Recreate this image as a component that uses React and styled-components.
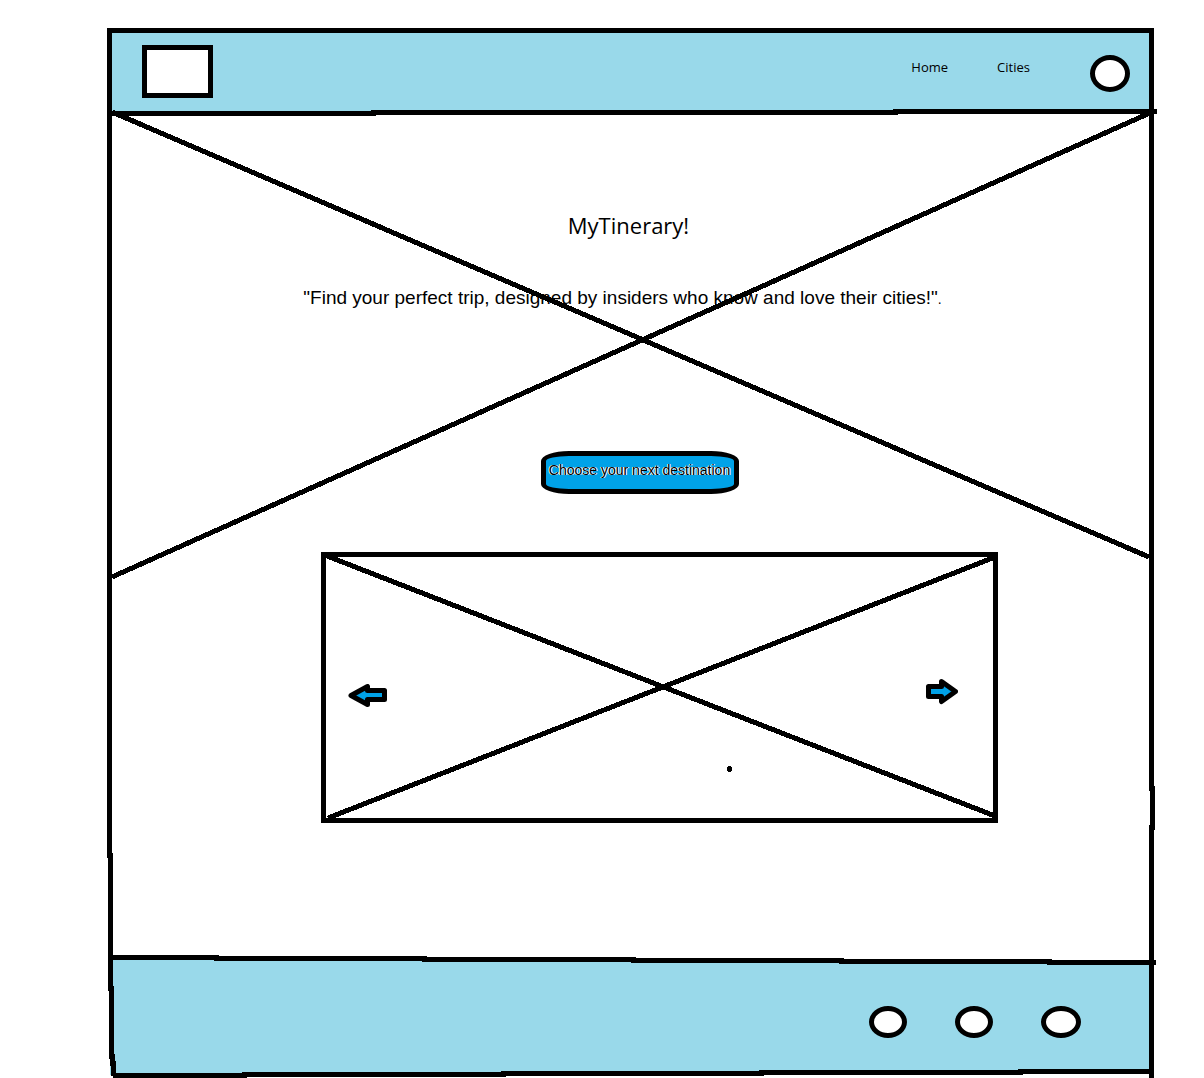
import React from "react";
import styled, { createGlobalStyle } from "styled-components";

const ink = "#000000";
const pale = "#99d9ea";
const accent = "#00a2e8";

const GlobalStyle = createGlobalStyle`
  * { box-sizing: border-box; }
  body { margin: 0; background: #ffffff; color: ${ink}; font-family: "Open Sans", sans-serif; }
`;

const Page = styled.div`
  min-height: 100vh;
  padding: 28px 50px 0 107px;
  display: flex;
`;

const Frame = styled.div`
  position: relative;
  flex: 1;
  display: flex;
  flex-direction: column;
  padding: 5px 3px 3px;
`;

const Strokes = styled.svg`
  position: absolute;
  inset: 0;
  width: 100%;
  height: 100%;
  overflow: visible;
  pointer-events: none;
  fill: none;
  stroke: ${ink};
  stroke-width: 5px;
  shape-rendering: crispEdges;

  path { vector-effect: non-scaling-stroke; }
`;

const Header = styled.header`
  display: flex;
  align-items: center;
  justify-content: space-between;
  padding: 12px 21px 14px 32px;
  background: ${pale};
`;

const Logo = styled.a`
  width: 71px;
  height: 53px;
  border: 5px solid ${ink};
  background: #ffffff;
`;

const HeaderEnd = styled.div`
  display: flex;
  gap: 60px;
  padding-top: 4px;
`;

const Nav = styled.nav`
  display: flex;
  gap: 49px;
`;

const NavLink = styled.a`
  color: ${ink};
  font-size: 13px;
  line-height: 24px;
  text-decoration: none;
`;

const Oval = styled.button`
  width: ${(p) => p.$width}px;
  height: ${(p) => p.$height}px;
  padding: 0;
  border: 5px solid ${ink};
  border-radius: 50%;
  background: #ffffff;
`;

const Main = styled.main`
  flex: 1;
  display: flex;
  flex-direction: column;
  align-items: center;
  padding: 98px 0 124px;
`;

const Title = styled.h1`
  margin: 0;
  padding-right: 4px;
  font-size: 22px;
  font-weight: 400;
  line-height: 30px;
`;

const Tagline = styled.p`
  margin: 46px 0 0;
  padding-right: 16px;
  font-family: "Liberation Sans", sans-serif;
  font-size: 19px;
  line-height: 24px;

  small { font-size: 14px; }
`;

const CallToAction = styled.button`
  height: 43px;
  margin: 140px 0 0 18px;
  padding: 0 0 6px;
  width: 198px;
  border: 5px solid ${ink};
  border-radius: 28px / 10px;
  background: ${accent};
  color: ${ink};
  font-family: "Liberation Sans", sans-serif;
  font-size: 14px;
  line-height: 20px;
  white-space: nowrap;
  text-shadow: 1px 0 #ffffff, -1px 0 #ffffff;
`;

const Carousel = styled.section`
  position: relative;
  align-self: stretch;
  display: flex;
  align-items: center;
  justify-content: space-between;
  height: 271px;
  margin: 58px 153px 0 211px;
  padding: 16px 35px 0 22px;
  border: 5px solid ${ink};
`;

const ArrowButton = styled.button`
  position: relative;
  display: flex;
  padding: 0;
  border: 0;
  background: none;

  svg {
    fill: ${accent};
    stroke: ${ink};
    stroke-width: 5px;
    stroke-linejoin: round;
  }
`;

const Footer = styled.footer`
  display: flex;
  align-items: center;
  justify-content: flex-end;
  gap: 48px;
  height: 118px;
  padding: 12px 70px 0 0;
  background: ${pale};
  clip-path: polygon(0 0, 100% 5px, 100% calc(100% - 4px), 0 100%);
`;

function FrameStrokes() {
  return (
    <Strokes viewBox="107 28 1047 1050" preserveAspectRatio="none" aria-hidden="true">
      <path d="M107 30.5H1154" />
      <path d="M109.5 28V855H110.5V988H111.5V1056H112.5V1063H113.5V1076" />
      <path d="M1151.5 28V788H1152.5V827H1151.5V1078" />
      <path d="M110 113.5H373V112.5H895V111.5H1157" />
      <path d="M110 957.5H216V958.5H424V959.5H633V960.5H841V961.5H1049V962.5H1156" />
      <path d="M113 1075.5H244V1074.5H503V1073.5H761V1072.5H1020V1071.5H1152" />
      <path d="M112 112L1149 557" />
      <path d="M1152 112L112 577" />
    </Strokes>
  );
}

export default function App() {
  return (
    <>
      <GlobalStyle />
      <Page>
        <Frame>
          <Header>
            <Logo href="#" aria-label="MyTinerary" />
            <HeaderEnd>
              <Nav>
                <NavLink href="#home">Home</NavLink>
                <NavLink href="#cities">Cities</NavLink>
              </Nav>
              <Oval $width={40} $height={37} aria-label="Account" />
            </HeaderEnd>
          </Header>
          <Main>
            <Title>MyTinerary!</Title>
            <Tagline>
              "Find your perfect trip, designed by insiders who know and love their cities!"<small>.</small>
            </Tagline>
            <CallToAction>Choose your next destination</CallToAction>
            <Carousel aria-label="Cities">
              <Strokes viewBox="326 557 667 261" preserveAspectRatio="none" aria-hidden="true">
                <path d="M327 556L995 816" />
                <path d="M995 557L328 818" />
                <circle cx="729.5" cy="769" r="3" fill={ink} stroke="none" />
              </Strokes>
              <ArrowButton aria-label="Previous">
                <svg width="39" height="24" viewBox="348 685 39 24">
                  <path d="M351 696.5L367.500 687.500V691.500H384.500V700.500H367.500V705.500Z" />
                </svg>
              </ArrowButton>
              <ArrowButton aria-label="Next">
                <svg width="32" height="34" viewBox="926 679 32 34">
                  <path d="M928.500 686.500H941.500V681.500L955.500 691.500L941.500 701.500V696.500H928.500Z" />
                </svg>
              </ArrowButton>
            </Carousel>
          </Main>
          <Footer>
            <Oval $width={38} $height={32} aria-label="Facebook" />
            <Oval $width={38} $height={32} aria-label="Twitter" />
            <Oval $width={40} $height={32} aria-label="Instagram" />
          </Footer>
          <FrameStrokes />
        </Frame>
      </Page>
    </>
  );
}
